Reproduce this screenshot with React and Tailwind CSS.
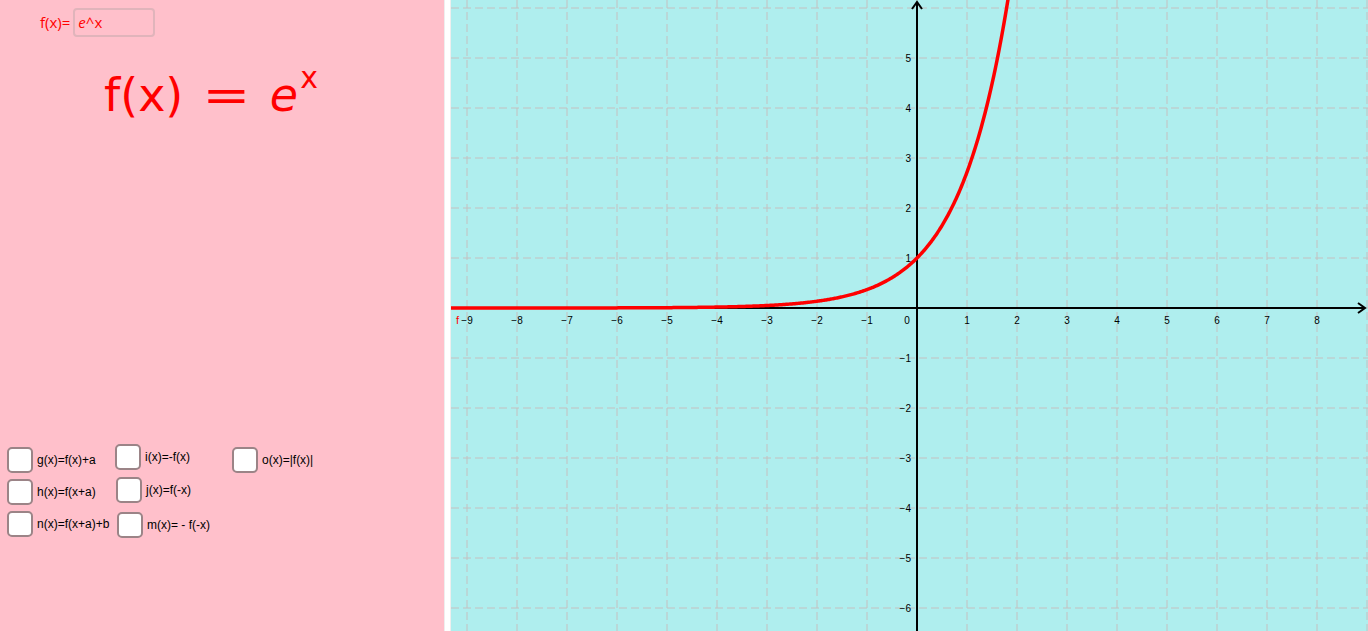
import React from 'react';

const W = 917;
const H = 631;
const OX = 466;
const OY = 308;
const U = 50;

const Check = ({ label, className = '' }) => (
    <div className={`flex items-center gap-[4px] ${className}`}>
        <div className="w-[26px] h-[26px] rounded-[5px] border-2 border-[#9b8487] bg-white shrink-0" />
        <span className="text-[12px] text-black whitespace-nowrap">{label}</span>
    </div>
);

const Graph = () => {
    const xs = [];
    for (let k = -9; k <= 9; k++) xs.push(k);
    const ys = [];
    for (let k = -6; k <= 6; k++) ys.push(k);

    // e^x sampled across the view
    const pts = [];
    for (let px = 0; px <= W; px += 1) {
        const x = (px - OX) / U;
        const py = OY - Math.exp(x) * U;
        pts.push(`${px},${py.toFixed(2)}`);
        if (py < -10) break;
    }

    return (
        <svg width={W} height={H} className="block">
            {xs.map(k => (
                <line key={'gx' + k} x1={OX + k * U} y1={0} x2={OX + k * U} y2={H}
                    stroke="#c4c0c0" strokeWidth="1" strokeDasharray="8 4" />
            ))}
            {ys.map(k => (
                <line key={'gy' + k} x1={0} y1={OY + k * U} x2={W} y2={OY + k * U}
                    stroke="#c4c0c0" strokeWidth="1" strokeDasharray="8 4" />
            ))}

            {/* axes */}
            <line x1={0} y1={OY} x2={W - 3} y2={OY} stroke="#000" strokeWidth="2" />
            <line x1={OX} y1={2} x2={OX} y2={H} stroke="#000" strokeWidth="2" />
            <path d={`M${W - 10} ${OY - 5} L${W - 3} ${OY} L${W - 10} ${OY + 5}`} fill="none" stroke="#000" strokeWidth="2" />
            <path d={`M${OX - 5} 9 L${OX} 2 L${OX + 5} 9`} fill="none" stroke="#000" strokeWidth="2" />

            <g fontFamily="'Liberation Sans', Arial, sans-serif" fontSize="10" fill="#000">
                {xs.filter(k => k !== 0 && k <= 8).map(k => (
                    <text key={'lx' + k} x={OX + k * U} y={OY + 16} textAnchor="middle">
                        {k < 0 ? '\u2212' + -k : k}
                    </text>
                ))}
                <text x={OX - 10} y={OY + 16} textAnchor="middle">0</text>
                {ys.filter(k => k !== 0 && k < 6).map(k => (
                    <text key={'ly' + k} x={OX - 6} y={OY - k * U + 4} textAnchor="end">
                        {k < 0 ? '\u2212' + -k : k}
                    </text>
                ))}
            </g>

            <polyline points={pts.join(' ')} fill="none" stroke="#ff0000" strokeWidth="3.5" strokeLinejoin="round" />
            <text x={5} y={OY + 16} fontFamily="'Liberation Sans', Arial, sans-serif" fontSize="11" fill="#ff0000">f</text>
        </svg>
    );
};

export default function App() {
    return (
        <div className="flex w-[1368px] h-[631px] overflow-hidden font-['Liberation_Sans',Arial,sans-serif]">
            {/* Algebra / controls panel */}
            <div className="w-[444px] h-full bg-[#ffc0cb] flex flex-col">
                <div className="flex items-center pl-[40px] pt-[8px] text-[15px] text-[#ff0000] font-['Open_Sans',sans-serif]">
                    <span>f(x)=</span>
                    <div className="ml-[3px] w-[82px] h-[29px] rounded-[4px] border-2 border-[#e0b4bb] flex items-center pl-[3px]">
                        <span className="italic">e</span>^x
                    </div>
                </div>

                <div className="pl-[104px] mt-[28px] flex items-start text-[#ff0000] font-['DejaVu_Sans',sans-serif] text-[46px] leading-[60px]">
                    <span>f(x)</span>
                    <span className="ml-[24px] scale-x-125">=</span>
                    <span className="ml-[24px] italic">e</span>
                    <span className="text-[30px] leading-[30px] ml-[2px] -mt-[2px]">x</span>
                </div>

                <div className="mt-[319px] flex flex-col gap-[6px]">
                    <div className="flex items-start">
                        <Check label="g(x)=f(x)+a" className="ml-[7px] mt-[3px] w-[108px]" />
                        <Check label="i(x)=-f(x)" className="w-[117px]" />
                        <Check label="o(x)=|f(x)|" className="mt-[3px]" />
                    </div>
                    <div className="flex items-start">
                        <Check label="h(x)=f(x+a)" className="ml-[7px] mt-[0px] w-[109px]" />
                        <Check label="j(x)=f(-x)" className="mt-[-2px]" />
                    </div>
                    <div className="flex items-start">
                        <Check label="n(x)=f(x+a)+b" className="ml-[7px] w-[110px]" />
                        <Check label="m(x)= - f(-x)" className="mt-[1px]" />
                    </div>
                </div>
            </div>

            <div className="w-[7px] h-full bg-white border-x border-[#eeeeee]" />

            {/* Graphics panel */}
            <div className="flex-1 h-full bg-[#afeeee]">
                <Graph />
            </div>
        </div>
    );
}
